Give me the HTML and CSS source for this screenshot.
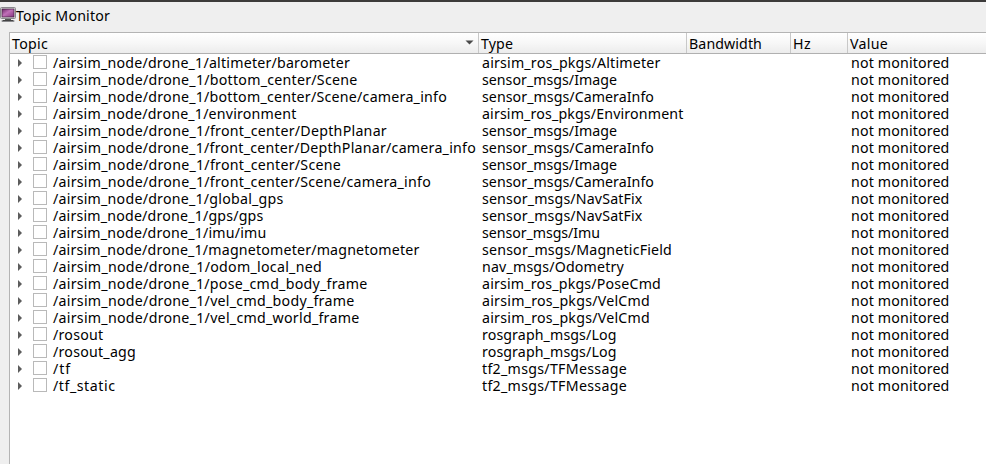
FILE: index.html
```
<!DOCTYPE html>
<html lang="en">
<head>
<meta charset="utf-8">
<title>Topic Monitor</title>
<link rel="stylesheet" href="styles.css">
</head>
<body>
<header class="titlebar">
  <svg class="icon" width="16" height="16" viewBox="0 0 16 16">
    <defs><linearGradient id="screen" x1="0" y1="0" x2="1" y2="1"><stop offset="0" stop-color="#6b2766"/><stop offset=".45" stop-color="#c070b8"/><stop offset="1" stop-color="#84357e"/></linearGradient></defs>
    <rect x=".5" y=".5" width="15" height="11" rx="1" fill="#ddd" stroke="#88888b"/>
    <rect x="2" y="2" width="12" height="8" fill="url(#screen)" stroke="#42203f" stroke-width=".7"/>
    <rect x="5" y="12" width="6" height="1.5" fill="#555"/>
    <rect x="1.5" y="13" width="13" height="2" rx="1" fill="#88888b"/>
    <rect x="3" y="13" width="10" height=".8" fill="#333"/>
  </svg>
  <span class="fit" data-width="94">Topic Monitor</span>
</header>
<main class="tree">
  <div class="head">
    <div class="cell sorted"><span class="fit" data-width="36">Topic</span><svg width="9" height="5" viewBox="0 0 9 5"><path d="M.5 .5h8L4.5 4.5z" fill="#4a4a4a"/></svg></div>
    <div class="cell"><span class="fit" data-width="32">Type</span></div>
    <div class="cell"><span class="fit" data-width="73">Bandwidth</span></div>
    <div class="cell"><span class="fit" data-width="18">Hz</span></div>
    <div class="cell"><span class="fit" data-width="38">Value</span></div>
  </div>
  <div class="rows" id="rows"></div>
</main>
<script src="app.js"></script>
</body>
</html>
```
FILE: styles.css
```
* { box-sizing: border-box; }
body {
  margin: 0;
  height: 464px;
  overflow: hidden;
  display: flex;
  flex-direction: column;
  border-top: 2px solid #3c3b3a;
  background: #efefef;
  color: #000;
  font: 14.2px/17px "Noto Sans", "Open Sans", sans-serif;
  white-space: nowrap;
}
.fit { display: inline-block; white-space: pre; }
.titlebar {
  display: flex;
  height: 30px;
  padding-top: 5px;
}
.icon { flex: none; }
.tree {
  flex: 1;
  margin-left: 9px;
  border: solid #b4b4b4;
  border-width: 1px 0 0 1px;
  background: #fff;
}
.head, .row {
  display: grid;
  grid-template-columns: 469px 208px 104px 57px 1fr;
}
.head {
  height: 21px;
  border-bottom: 1px solid #b0b0b0;
  background: linear-gradient(#fff, #f7f7f7 50%, #ececec);
}
.cell {
  padding: 2px 0 0 2px;
  border-right: 1px solid #c8c8c8;
}
.cell:last-child { border-right: 0; }
.sorted {
  display: flex;
  justify-content: space-between;
  padding-right: 4px;
}
.sorted svg { margin-top: 5px; }
.row { height: 17px; }
.topic {
  display: flex;
  padding-left: 8px;
}
.arrow {
  flex: none;
  width: 4px;
  height: 8px;
  margin-top: 5px;
  background: #5c5c5c;
  clip-path: polygon(0 0, 100% 50%, 0 100%);
}
.check {
  flex: none;
  width: 14px;
  height: 14px;
  margin: 1px 6px 0 11px;
  border: 1px solid #b9b9b9;
  background: #fff;
}
.type { padding-left: 3px; }
.value { grid-column: 5; padding-left: 3px; }
```
FILE: app.js
```
const types = {
  alt: ["airsim_ros_pkgs/Altimeter", 178.5],
  image: ["sensor_msgs/Image", 135],
  camera: ["sensor_msgs/CameraInfo", 172],
  env: ["airsim_ros_pkgs/Environment", 201.5],
  nav: ["sensor_msgs/NavSatFix", 160.5],
  imu: ["sensor_msgs/Imu", 118],
  mag: ["sensor_msgs/MagneticField", 190],
  odom: ["nav_msgs/Odometry", 142],
  pose: ["airsim_ros_pkgs/PoseCmd", 179],
  vel: ["airsim_ros_pkgs/VelCmd", 168],
  log: ["rosgraph_msgs/Log", 134.5],
  tf: ["tf2_msgs/TFMessage", 145]
};
const drone = "/airsim_node/drone_1/";
const topics = [
  [drone + "altimeter/barometer", 297, "alt"],
  [drone + "bottom_center/Scene", 304.5, "image"],
  [drone + "bottom_center/Scene/camera_info", 394, "camera"],
  [drone + "environment", 243.5, "env"],
  [drone + "front_center/DepthPlanar", 334, "image"],
  [drone + "front_center/DepthPlanar/camera_info", 423, "camera"],
  [drone + "front_center/Scene", 288, "image"],
  [drone + "front_center/Scene/camera_info", 378, "camera"],
  [drone + "global_gps", 230.5, "nav"],
  [drone + "gps/gps", 210.5, "nav"],
  [drone + "imu/imu", 213.5, "imu"],
  [drone + "magnetometer/magnetometer", 366.5, "mag"],
  [drone + "odom_local_ned", 269, "odom"],
  [drone + "pose_cmd_body_frame", 314.5, "pose"],
  [drone + "vel_cmd_body_frame", 301.5, "vel"],
  [drone + "vel_cmd_world_frame", 306.5, "vel"],
  ["/rosout", 50.5, "log"],
  ["/rosout_agg", 83, "log"],
  ["/tf", 18, "tf"],
  ["/tf_static", 62.5, "tf"]
];
const text = (label, width) => `<span class="fit" data-width="${width}">${label}</span>`;
document.getElementById("rows").innerHTML = topics.map(([name, width, type]) =>
  `<div class="row"><div class="topic"><i class="arrow"></i><i class="check"></i>${text(name, width)}</div>` +
  `<div class="type">${text(...types[type])}</div><div class="value">${text("not monitored", 98.5)}</div></div>`
).join("");

document.querySelectorAll(".fit").forEach(el => {
  const gap = (el.dataset.width - el.getBoundingClientRect().width) / el.textContent.length;
  el.style.letterSpacing = gap + "px";
});
```
